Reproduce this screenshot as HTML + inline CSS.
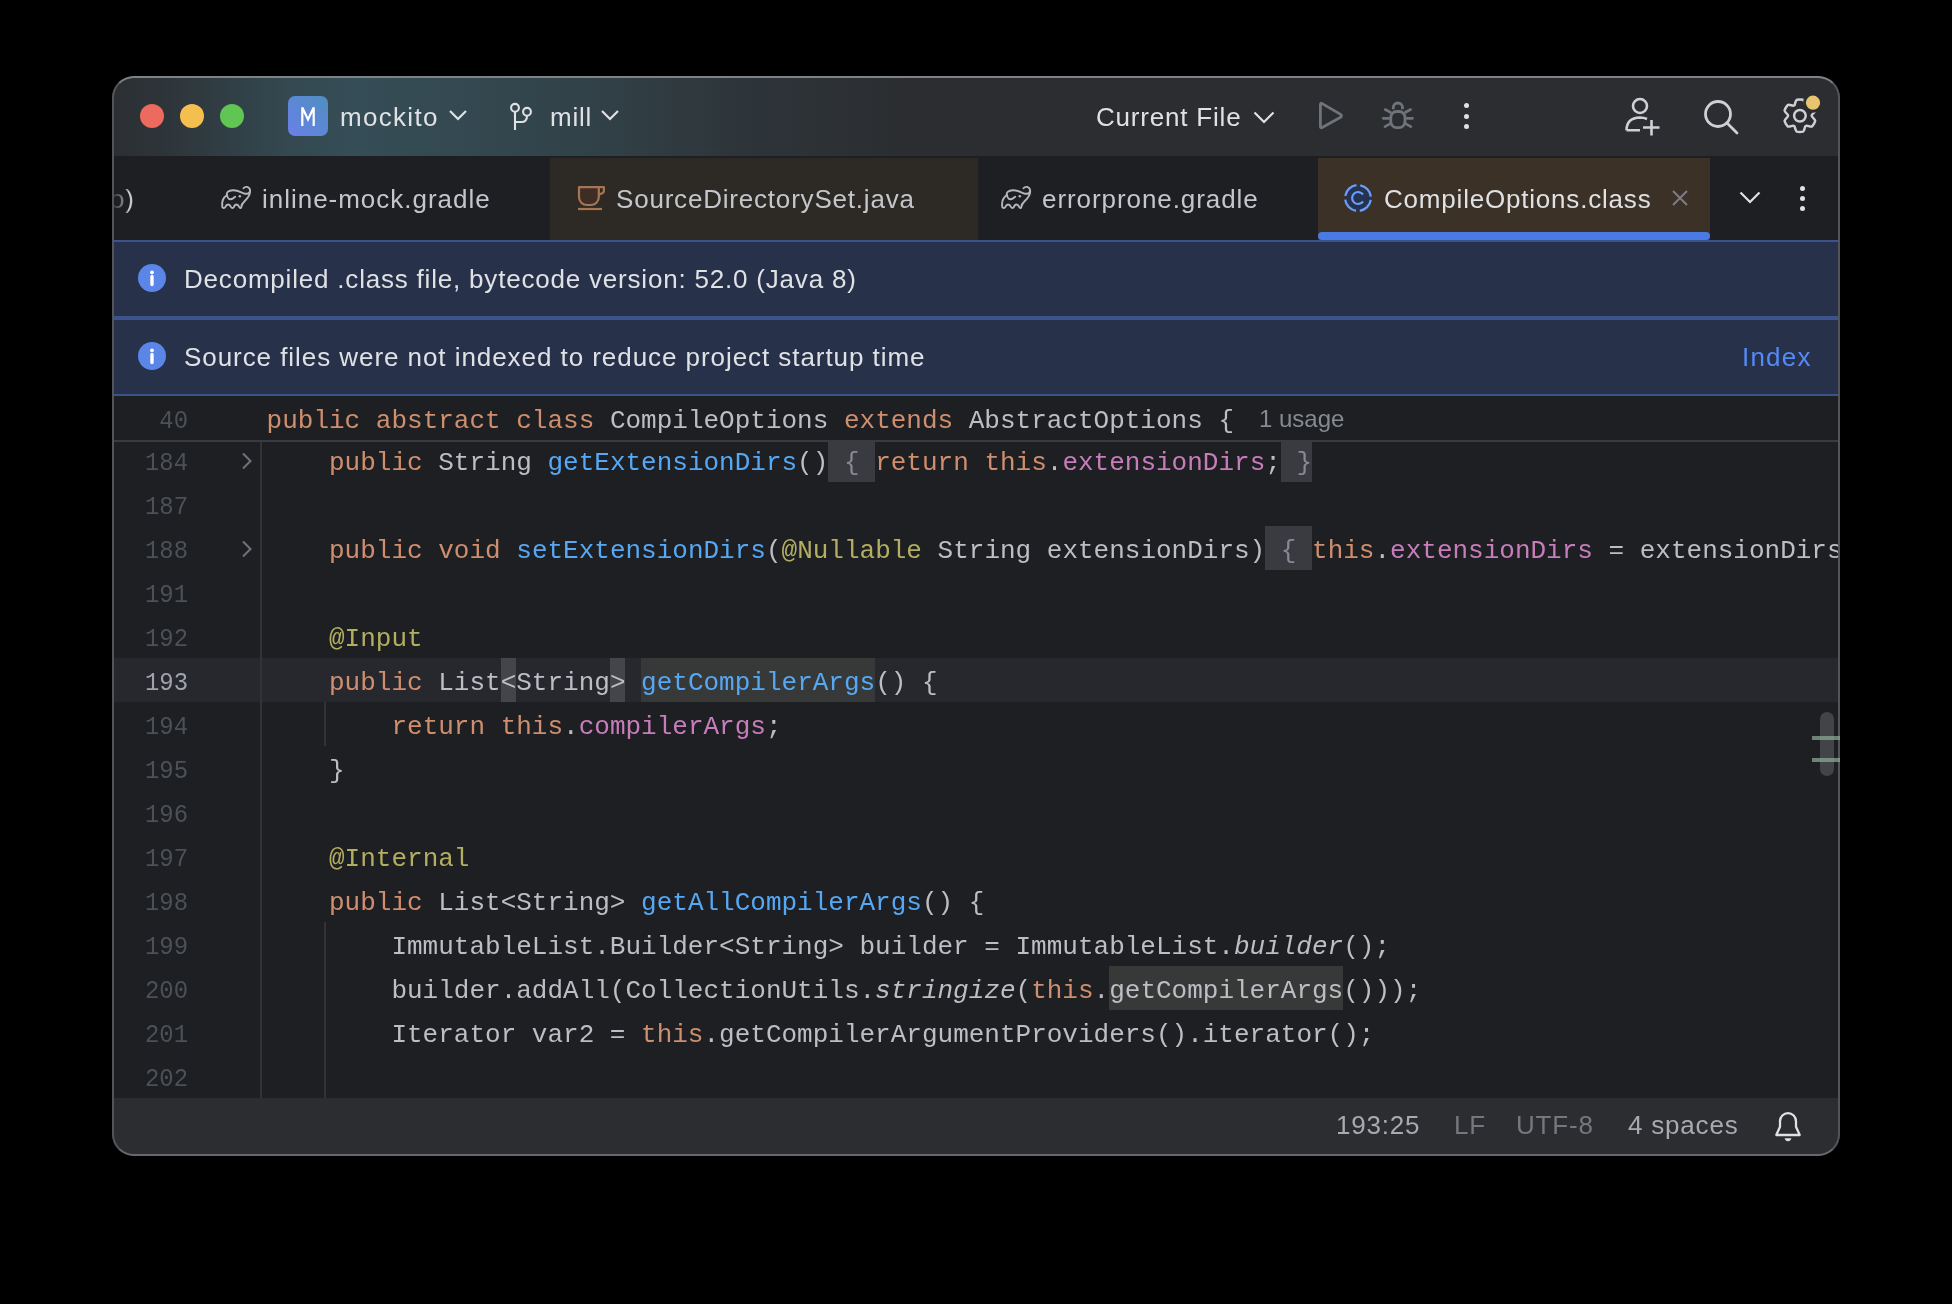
<!DOCTYPE html>
<html><head><meta charset="utf-8">
<style>
*{margin:0;padding:0;box-sizing:border-box}
html,body{width:1952px;height:1304px;background:#000;overflow:hidden}
body{position:relative;font-family:"Liberation Sans",sans-serif}
.a{position:absolute}
.ui{font-family:"Liberation Sans",sans-serif;font-size:26px;letter-spacing:0.8px;white-space:nowrap;line-height:30px}
.mono{font-family:"Liberation Mono",monospace;font-size:26px;white-space:pre;line-height:44px;letter-spacing:0}
#titlebar{left:112px;top:76px;width:1728px;height:80px;background:#2B2D30}
#tabbar{left:112px;top:156px;width:1728px;height:84px;background:#1E1F22}
#editor{left:112px;top:396px;width:1728px;height:702px;background:#1E1F22}
#status{left:112px;top:1098px;width:1728px;height:58px;background:#2B2D30}
#frame{left:112px;top:76px;width:1728px;height:1080px;border:2px solid #535457;border-top-color:#7f8285;border-bottom-color:#68696c;border-radius:22px;box-shadow:0 0 0 400px #000}
.ban{left:112px;width:1728px;background:#27314A}
.banline{left:112px;width:1728px;background:#3C538C}
.k{color:#CF8E6D}.f{color:#56A8F5}.p{color:#C77DBB}.an{color:#B3AE60}.t{color:#BCBEC4}.fd{color:#868A91}.ti{color:#BCBEC4;font-style:italic}
.ln{color:#4B5059;text-align:right;width:90px;left:98px;transform:scaleX(0.92);transform-origin:100% 50%}
.lnc{color:#A1A3AB;text-align:right;width:90px;left:98px;transform:scaleX(0.92);transform-origin:100% 50%}
.tt{color:#DFE1E5}
.tab{color:#C4C6CB}
</style></head><body>
<div id="root" class="a" style="left:0;top:0;width:1952px;height:1304px;will-change:transform;background:#000;overflow:hidden">
<!-- title bar -->
<div id="titlebar" class="a"></div>
<div class="a" style="left:112px;top:76px;width:1000px;height:80px;background:linear-gradient(90deg, rgba(70,130,150,0.02) 0px, rgba(70,130,150,0.1) 60px, rgba(70,130,150,0.33) 180px, rgba(70,130,150,0.38) 240px, rgba(70,130,150,0.33) 340px, rgba(70,130,150,0.22) 500px, rgba(70,130,150,0.1) 620px, rgba(70,130,150,0) 800px)"></div>
<div class="a" style="left:140px;top:104px;width:24px;height:24px;border-radius:50%;background:#ED6A5E"></div>
<div class="a" style="left:180px;top:104px;width:24px;height:24px;border-radius:50%;background:#F4BF4F"></div>
<div class="a" style="left:220px;top:104px;width:24px;height:24px;border-radius:50%;background:#61C554"></div>
<div class="a" style="left:288px;top:96px;width:40px;height:40px;border-radius:7px;background:linear-gradient(45deg,#6A80E8,#4E8FC0)"></div>
<svg class="a" style="left:288px;top:96px" width="40" height="40" viewBox="0 0 40 40"><path d="M14.3 30 V11.5 L20 23.5 L25.7 11.5 V30" fill="none" stroke="#fff" stroke-width="2.2" stroke-linejoin="miter"/></svg>
<div class="a ui tt" style="left:340px;top:102px;letter-spacing:1.3px">mockito</div>
<svg class="a" style="left:448px;top:108px" width="20" height="14" viewBox="0 0 20 14"><path d="M2 3 L10 11 L18 3" fill="none" stroke="#DFE1E5" stroke-width="2.2"/></svg>
<svg class="a" style="left:506px;top:100px" width="30" height="32" viewBox="0 0 30 32"><circle cx="9" cy="7.8" r="3.9" fill="none" stroke="#DFE1E5" stroke-width="2.1"/><circle cx="21" cy="11.8" r="3.9" fill="none" stroke="#DFE1E5" stroke-width="2.1"/><path d="M9 11.7 V29.9 M9 22 H15.5 Q21 22 21 15.7" fill="none" stroke="#DFE1E5" stroke-width="2.1"/></svg>
<div class="a ui tt" style="left:550px;top:102px">mill</div>
<svg class="a" style="left:600px;top:108px" width="20" height="14" viewBox="0 0 20 14"><path d="M2 3 L10 11 L18 3" fill="none" stroke="#DFE1E5" stroke-width="2.2"/></svg>
<div class="a ui tt" style="left:1096px;top:102px">Current File</div>
<svg class="a" style="left:1252px;top:109px" width="24" height="16" viewBox="0 0 24 16"><path d="M2.5 3.5 L12 13 L21.5 3.5" fill="none" stroke="#DFE1E5" stroke-width="2.2"/></svg>
<svg class="a" style="left:1310px;top:95px" width="40" height="40" viewBox="0 0 40 40"><path d="M10.4 9.6 Q10.4 7.6 12.2 8.6 L30.6 19.4 Q32.3 20.9 30.6 22.3 L12.2 32.4 Q10.4 33.4 10.4 31.4 Z" fill="none" stroke="#6F737A" stroke-width="2.8" stroke-linejoin="round"/></svg>
<svg class="a" style="left:1376px;top:96px" width="44" height="40" viewBox="0 0 44 40"><rect x="14.8" y="15.5" width="14.2" height="16.2" rx="5.8" ry="6.2" fill="none" stroke="#6F737A" stroke-width="2.8"/><path d="M17.3 13.2 V11.6 A4.6 4.6 0 0 1 26.5 11.6 V13.2" fill="none" stroke="#6F737A" stroke-width="2.8"/><path d="M9.2 13.6 L14.3 16.3 M7.3 22.3 H13 M9 30.6 L14.3 27.6 M34.6 13.6 L29.5 16.3 M36.5 22.3 H30.8 M34.8 30.6 L29.5 27.6" fill="none" stroke="#6F737A" stroke-width="2.8" stroke-linecap="round"/></svg>
<div class="a" style="left:1463.5px;top:103px;width:5px;height:5px;border-radius:50%;background:#DFE1E5"></div>
<div class="a" style="left:1463.5px;top:113.5px;width:5px;height:5px;border-radius:50%;background:#DFE1E5"></div>
<div class="a" style="left:1463.5px;top:124px;width:5px;height:5px;border-radius:50%;background:#DFE1E5"></div>
<svg class="a" style="left:1620px;top:94px" width="44" height="44" viewBox="0 0 44 44"><circle cx="20" cy="12" r="7" fill="none" stroke="#CED0D6" stroke-width="2.6"/><path d="M6.5 36.3 Q6.5 24 20 23.5 Q24 23.5 27 25 M6.5 36.3 H20 M31.5 26 V41.5 M23 33.5 H39.5" fill="none" stroke="#CED0D6" stroke-width="2.6"/></svg>
<svg class="a" style="left:1700px;top:94px" width="44" height="44" viewBox="0 0 44 44"><circle cx="18" cy="20" r="12.5" fill="none" stroke="#CED0D6" stroke-width="2.8"/><path d="M27 29 L37 39" fill="none" stroke="#CED0D6" stroke-width="2.8" stroke-linecap="round"/></svg>
<svg class="a" style="left:1778px;top:94px" width="44" height="44" viewBox="0 0 44 44"><path d="M18.81 5.80 Q21.90 5.01 24.99 5.80 C27.02 6.84 26.13 10.68 27.80 11.48 C29.33 12.53 32.21 9.84 34.13 11.07 Q36.35 13.36 37.22 16.43 C37.33 18.70 33.55 19.85 33.70 21.70 C33.55 23.55 37.33 24.70 37.22 26.97 Q36.35 30.04 34.13 32.33 C32.21 33.56 29.33 30.87 27.80 31.92 C26.13 32.72 27.02 36.56 24.99 37.60 Q21.90 38.39 18.81 37.60 C16.78 36.56 17.67 32.72 16.00 31.92 C14.47 30.87 11.59 33.56 9.67 32.33 Q7.45 30.04 6.58 26.97 C6.47 24.70 10.25 23.55 10.10 21.70 C10.25 19.85 6.47 18.70 6.58 16.43 Q7.45 13.36 9.67 11.07 C11.59 9.84 14.47 12.53 16.00 11.48 C17.67 10.68 16.78 6.84 18.81 5.80 Z" fill="none" stroke="#CED0D6" stroke-width="2.5" stroke-linejoin="round"/><circle cx="21.9" cy="21.7" r="5.8" fill="none" stroke="#CED0D6" stroke-width="2.5"/><circle cx="35" cy="8.7" r="10" fill="#2B2D30"/><circle cx="35" cy="8.7" r="7.1" fill="#E8C46E"/></svg>

<!-- tab bar -->
<div id="tabbar" class="a"></div>
<div class="a ui tab" style="left:110px;top:184px">o)</div>
<div class="a" style="left:112px;top:158px;width:16px;height:82px;background:linear-gradient(90deg,rgba(30,31,34,0.9),rgba(30,31,34,0.2))"></div>
<svg class="a" style="left:214px;top:180px" width="44" height="34" viewBox="0 0 44 34"><path d="M29.5 8.2 C31 6.2 35.2 6.2 36 9.8 C36.8 13.5 34.5 17.5 31 20.7 C28.8 22.7 27.4 24.6 27.2 27.2 C27 28.2 25.8 28.2 25.3 27.2 C23.6 23.6 21.2 23.6 19.8 27.2 C19.3 28.2 17.6 28.2 17.1 27.2 C15.4 23.6 12.8 23.6 11.2 27.2 C10.7 28.2 8.8 28.4 8.3 27.2 C7.5 22 9 17.6 12.8 15.2 M12.8 15.8 C12 12.6 14 10.4 19 10.2 C24 10 27.2 12.6 30.2 13.5 C33.2 14.3 35.6 13.6 36 10.8 M12.8 13.5 C13.2 17.2 14.2 19.2 16.2 19.3 C18 19.4 19.6 18.2 21.2 16.8" fill="none" stroke="#B4B6BB" stroke-width="1.9" stroke-linecap="round" stroke-linejoin="round"/><circle cx="25.8" cy="16.3" r="1.25" fill="#B4B6BB"/></svg>
<div class="a ui tab" style="left:262px;top:184px;letter-spacing:0.98px">inline-mock.gradle</div>
<div class="a" style="left:550px;top:158px;width:428px;height:82px;background:#2D2A25"></div>
<svg class="a" style="left:574px;top:182px" width="34" height="32" viewBox="0 0 34 32"><path d="M5 5.2 H24.8 V15 A8 8 0 0 1 16.8 23 H13 A8 8 0 0 1 5 15 Z" fill="#3D2D24" stroke="#A87553" stroke-width="2.2" stroke-linejoin="round"/><path d="M24.8 5.2 H29.9 V8.8 Q29.9 11.6 25 12.3" fill="none" stroke="#A87553" stroke-width="2.2" stroke-linejoin="round"/><path d="M4 27 H28" stroke="#A87553" stroke-width="2.2"/></svg>
<div class="a ui tab" style="left:616px;top:184px">SourceDirectorySet.java</div>
<svg class="a" style="left:994px;top:180px" width="44" height="34" viewBox="0 0 44 34"><path d="M29.5 8.2 C31 6.2 35.2 6.2 36 9.8 C36.8 13.5 34.5 17.5 31 20.7 C28.8 22.7 27.4 24.6 27.2 27.2 C27 28.2 25.8 28.2 25.3 27.2 C23.6 23.6 21.2 23.6 19.8 27.2 C19.3 28.2 17.6 28.2 17.1 27.2 C15.4 23.6 12.8 23.6 11.2 27.2 C10.7 28.2 8.8 28.4 8.3 27.2 C7.5 22 9 17.6 12.8 15.2 M12.8 15.8 C12 12.6 14 10.4 19 10.2 C24 10 27.2 12.6 30.2 13.5 C33.2 14.3 35.6 13.6 36 10.8 M12.8 13.5 C13.2 17.2 14.2 19.2 16.2 19.3 C18 19.4 19.6 18.2 21.2 16.8" fill="none" stroke="#B4B6BB" stroke-width="1.9" stroke-linecap="round" stroke-linejoin="round"/><circle cx="25.8" cy="16.3" r="1.25" fill="#B4B6BB"/></svg>
<div class="a ui tab" style="left:1042px;top:184px;letter-spacing:0.93px">errorprone.gradle</div>
<div class="a" style="left:1318px;top:158px;width:392px;height:82px;background:#3C3126"></div>
<div class="a" style="left:1318px;top:232px;width:392px;height:8px;border-radius:4px 4px 4px 4px;background:#4A7AE6"></div>
<svg class="a" style="left:1342px;top:182px" width="32" height="32" viewBox="0 0 32 32"><circle cx="16" cy="16" r="13" fill="#253250"/><circle cx="16" cy="16" r="12.9" fill="none" stroke="#6A9CF9" stroke-width="2.3" stroke-dasharray="16.36 3.9" stroke-dashoffset="18.31"/><path d="M21 12.5 A6 6 0 1 0 21 19.5" fill="none" stroke="#6A9CF9" stroke-width="2.2"/></svg>
<div class="a ui tt" style="left:1384px;top:184px">CompileOptions.class</div>
<svg class="a" style="left:1670px;top:188px" width="20" height="20" viewBox="0 0 20 20"><path d="M3 3 L17 17 M17 3 L3 17" stroke="#7B7E84" stroke-width="2"/></svg>
<svg class="a" style="left:1738px;top:189px" width="24" height="18" viewBox="0 0 24 18"><path d="M2.5 3.5 L12 13 L21.5 3.5" fill="none" stroke="#DFE1E5" stroke-width="2.2"/></svg>
<div class="a" style="left:1799.5px;top:185.5px;width:5px;height:5px;border-radius:50%;background:#DFE1E5"></div>
<div class="a" style="left:1799.5px;top:195.5px;width:5px;height:5px;border-radius:50%;background:#DFE1E5"></div>
<div class="a" style="left:1799.5px;top:205.5px;width:5px;height:5px;border-radius:50%;background:#DFE1E5"></div>

<!-- editor -->
<div id="editor" class="a"></div>
<div class="a" style="left:114px;top:658px;width:1724px;height:44px;background:#26282E"></div>
<div class="a" style="left:260px;top:396px;width:2px;height:702px;background:#313338"></div>
<div class="a" style="left:324px;top:702px;width:2px;height:44px;background:#313338"></div>
<div class="a" style="left:324px;top:922px;width:2px;height:200px;background:#313338"></div>
<div class="a mono ln" style="top:441px">184</div>
<svg class="a" style="left:239.3px;top:452px" width="16" height="18" viewBox="0 0 16 18"><path d="M4 1.5 L11.5 9 L4 16.5" fill="none" stroke="#6F737A" stroke-width="2"/></svg>
<div class="a" style="left:828.2px;top:438px;width:46.8px;height:44px;background:#393B40"></div>
<div class="a" style="left:1280.6px;top:438px;width:31.2px;height:44px;background:#393B40"></div>
<div class="a mono" style="left:266.6px;top:441px"><span class="t">    </span><span class="k">public</span><span class="t"> String </span><span class="f">getExtensionDirs</span><span class="t">()</span><span class="fd"> { </span><span class="k">return</span><span class="t"> </span><span class="k">this</span><span class="t">.</span><span class="p">extensionDirs</span><span class="t">;</span><span class="fd"> }</span></div>
<div class="a mono ln" style="top:485px">187</div>
<div class="a mono ln" style="top:529px">188</div>
<svg class="a" style="left:239.3px;top:540px" width="16" height="18" viewBox="0 0 16 18"><path d="M4 1.5 L11.5 9 L4 16.5" fill="none" stroke="#6F737A" stroke-width="2"/></svg>
<div class="a" style="left:1265.0px;top:526px;width:46.8px;height:44px;background:#393B40"></div>
<div class="a mono" style="left:266.6px;top:529px"><span class="t">    </span><span class="k">public</span><span class="t"> </span><span class="k">void</span><span class="t"> </span><span class="f">setExtensionDirs</span><span class="t">(</span><span class="an">@Nullable</span><span class="t"> String extensionDirs)</span><span class="fd"> { </span><span class="k">this</span><span class="t">.</span><span class="p">extensionDirs</span><span class="t"> = extensionDirs;</span></div>
<div class="a mono ln" style="top:573px">191</div>
<div class="a mono ln" style="top:617px">192</div>
<div class="a mono" style="left:266.6px;top:617px"><span class="t">    </span><span class="an">@Input</span></div>
<div class="a mono lnc" style="top:661px">193</div>
<div class="a" style="left:500.6px;top:658px;width:15.6px;height:44px;background:#43454A"></div>
<div class="a" style="left:609.8px;top:658px;width:15.6px;height:44px;background:#43454A"></div>
<div class="a" style="left:641.0px;top:658px;width:234.0px;height:44px;background:#373938"></div>
<div class="a mono" style="left:266.6px;top:661px"><span class="t">    </span><span class="k">public</span><span class="t"> List</span><span class="t">&lt;</span><span class="t">String</span><span class="t">&gt;</span><span class="t"> </span><span class="f">getCompilerArgs</span><span class="t">() {</span></div>
<div class="a mono ln" style="top:705px">194</div>
<div class="a mono" style="left:266.6px;top:705px"><span class="t">        </span><span class="k">return</span><span class="t"> </span><span class="k">this</span><span class="t">.</span><span class="p">compilerArgs</span><span class="t">;</span></div>
<div class="a mono ln" style="top:749px">195</div>
<div class="a mono" style="left:266.6px;top:749px"><span class="t">    }</span></div>
<div class="a mono ln" style="top:793px">196</div>
<div class="a mono ln" style="top:837px">197</div>
<div class="a mono" style="left:266.6px;top:837px"><span class="t">    </span><span class="an">@Internal</span></div>
<div class="a mono ln" style="top:881px">198</div>
<div class="a mono" style="left:266.6px;top:881px"><span class="t">    </span><span class="k">public</span><span class="t"> List&lt;String&gt; </span><span class="f">getAllCompilerArgs</span><span class="t">() {</span></div>
<div class="a mono ln" style="top:925px">199</div>
<div class="a mono" style="left:266.6px;top:925px"><span class="t">        ImmutableList.Builder&lt;String&gt; builder = ImmutableList.</span><span class="ti">builder</span><span class="t">();</span></div>
<div class="a mono ln" style="top:969px">200</div>
<div class="a" style="left:1109.0px;top:966px;width:234.0px;height:44px;background:#373938"></div>
<div class="a mono" style="left:266.6px;top:969px"><span class="t">        builder.addAll(CollectionUtils.</span><span class="ti">stringize</span><span class="t">(</span><span class="k">this</span><span class="t">.</span><span class="t">getCompilerArgs</span><span class="t">()));</span></div>
<div class="a mono ln" style="top:1013px">201</div>
<div class="a mono" style="left:266.6px;top:1013px"><span class="t">        Iterator var2 = </span><span class="k">this</span><span class="t">.getCompilerArgumentProviders().iterator();</span></div>
<div class="a mono ln" style="top:1057px">202</div>
<!-- scrollbar -->
<div class="a" style="left:1820px;top:712px;width:14px;height:64px;border-radius:7px;background:rgba(80,82,86,0.75)"></div>

<!-- sticky line -->
<div class="a" style="left:112px;top:396px;width:1728px;height:44px;background:#1E1F22"></div>
<div class="a" style="left:112px;top:440px;width:1728px;height:2px;background:#393B40"></div>
<div class="a mono ln" style="top:399px">40</div>
<div class="a mono" style="left:266.6px;top:399px"><span class="k">public</span><span class="t"> </span><span class="k">abstract</span><span class="t"> </span><span class="k">class</span><span class="t"> CompileOptions </span><span class="k">extends</span><span class="t"> AbstractOptions {</span></div>
<div class="a" style="left:1259px;top:404px;font-size:24px;line-height:30px;color:#868A91;white-space:nowrap">1 usage</div>

<!-- banners -->
<div class="a banline" style="top:240px;height:2px"></div>
<div class="a ban" style="top:242px;height:74px"></div>
<div class="a banline" style="top:316px;height:4px"></div>
<div class="a ban" style="top:320px;height:74px"></div>
<div class="a banline" style="top:394px;height:2px"></div>
<svg class="a" style="left:138px;top:264px" width="28" height="28" viewBox="0 0 28 28"><circle cx="14" cy="14" r="14" fill="#5B86E8"/><circle cx="14" cy="8.3" r="1.9" fill="#fff"/><path d="M14 12.5 V20.5" stroke="#fff" stroke-width="3.4" stroke-linecap="round"/></svg>
<div class="a ui tt" style="left:184px;top:264px">Decompiled .class file, bytecode version: 52.0 (Java 8)</div>
<svg class="a" style="left:138px;top:342px" width="28" height="28" viewBox="0 0 28 28"><circle cx="14" cy="14" r="14" fill="#5B86E8"/><circle cx="14" cy="8.3" r="1.9" fill="#fff"/><path d="M14 12.5 V20.5" stroke="#fff" stroke-width="3.4" stroke-linecap="round"/></svg>
<div class="a ui tt" style="left:184px;top:342px;letter-spacing:0.94px">Source files were not indexed to reduce project startup time</div>
<div class="a ui" style="left:1742px;top:342px;color:#548AF7;letter-spacing:1.2px">Index</div>

<!-- status -->
<div id="status" class="a"></div>
<div class="a ui" style="left:1336px;top:1110px;color:#A8AAB0">193:25</div>
<div class="a ui" style="left:1454px;top:1110px;color:#74777C">LF</div>
<div class="a ui" style="left:1516px;top:1110px;color:#74777C">UTF-8</div>
<div class="a ui" style="left:1628px;top:1110px;color:#A8AAB0">4 spaces</div>
<svg class="a" style="left:1772px;top:1110px" width="32" height="34" viewBox="0 0 32 34"><path d="M4.3 25 L8 16.8 V11.2 A8 8 0 0 1 24 11.2 V16.8 L27.7 25 Z" fill="none" stroke="#DFE1E5" stroke-width="2.3" stroke-linejoin="round"/><path d="M12.6 28.2 H19.4 Q18.6 31.2 16 31.2 Q13.4 31.2 12.6 28.2 Z" fill="#DFE1E5"/></svg>
<div id="frame" class="a"></div>
<div class="a" style="left:1812px;top:736px;width:28px;height:4px;background:rgba(140,175,150,0.7)"></div>
<div class="a" style="left:1812px;top:758px;width:28px;height:4px;background:rgba(140,175,150,0.7)"></div>
</div>
</body></html>
